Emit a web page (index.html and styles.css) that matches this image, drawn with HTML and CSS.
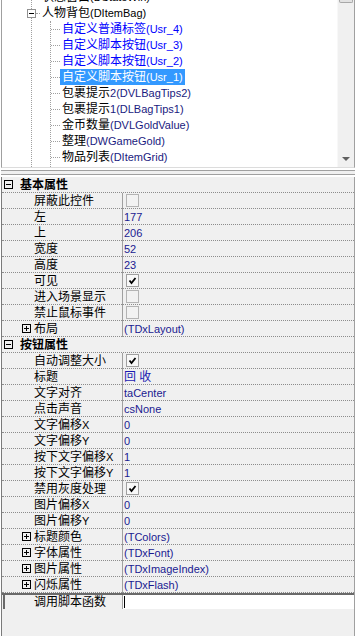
FILE: index.html
```html
<!DOCTYPE html>
<html lang="zh-CN">
<head>
    <meta charset="UTF-8">
    <meta name="viewport" content="width=device-width, initial-scale=1.0">
    <title>界面编辑器 - 属性</title>
    <link rel="stylesheet" href="styles.css">
</head>
<body>
    <div class="panel">
        <!-- Control tree -->
        <div class="tree">
            <div class="tree-view">
                <ul class="level1">
                    <li>
                        <div class="node"><span class="label">状态窗口<span class="en">(DStateWin)</span></span></div>
                    </li>
                    <li>
                        <div class="node parent">
                            <span class="toggle minus"></span><span class="stub"></span>
                            <span class="label">人物背包<span class="en">(DItemBag)</span></span>
                        </div>
                        <ul class="level2">
                            <li><div class="node"><span class="label custom">自定义普通标签<span class="en">(Usr_4)</span></span></div></li>
                            <li><div class="node"><span class="label custom">自定义脚本按钮<span class="en">(Usr_3)</span></span></div></li>
                            <li><div class="node"><span class="label custom">自定义脚本按钮<span class="en">(Usr_2)</span></span></div></li>
                            <li><div class="node"><span class="label custom selected">自定义脚本按钮<span class="en">(Usr_1)</span></span></div></li>
                            <li><div class="node"><span class="label">包裹提示<span class="en navy">2(DVLBagTips2)</span></span></div></li>
                            <li><div class="node"><span class="label">包裹提示<span class="en navy">1(DLBagTips1)</span></span></div></li>
                            <li><div class="node"><span class="label">金币数量<span class="en navy">(DVLGoldValue)</span></span></div></li>
                            <li><div class="node"><span class="label">整理<span class="en navy">(DWGameGold)</span></span></div></li>
                            <li><div class="node"><span class="label">物品列表<span class="en navy">(DItemGrid)</span></span></div></li>
                        </ul>
                    </li>
                </ul>
            </div>
            <div class="scrollbar">
                <div class="thumb"></div>
                <div class="arrow-down"></div>
            </div>
        </div>

        <div class="splitter"></div>

        <!-- Property inspector -->
        <div class="inspector">
            <div class="group"><span class="toggle minus dark"></span>基本属性</div>
            <div class="prop"><div class="name">屏蔽此控件</div><div class="value"><span class="check"></span></div></div>
            <div class="prop"><div class="name">左</div><div class="value">177</div></div>
            <div class="prop"><div class="name">上</div><div class="value">206</div></div>
            <div class="prop"><div class="name">宽度</div><div class="value">52</div></div>
            <div class="prop"><div class="name">高度</div><div class="value">23</div></div>
            <div class="prop"><div class="name">可见</div><div class="value"><span class="check checked"><svg viewBox="0 0 11 11" width="11" height="11"><path d="M2.5 5.5 L4.5 8 L8.5 3" fill="none" stroke="#000" stroke-width="1.8"/></svg></span></div></div>
            <div class="prop"><div class="name">进入场景显示</div><div class="value"><span class="check"></span></div></div>
            <div class="prop"><div class="name">禁止鼠标事件</div><div class="value"><span class="check"></span></div></div>
            <div class="prop"><div class="name sub"><span class="toggle plus dark"></span>布局</div><div class="value">(TDxLayout)</div></div>

            <div class="group"><span class="toggle minus dark"></span>按钮属性</div>
            <div class="prop"><div class="name">自动调整大小</div><div class="value"><span class="check checked"><svg viewBox="0 0 11 11" width="11" height="11"><path d="M2.5 5.5 L4.5 8 L8.5 3" fill="none" stroke="#000" stroke-width="1.8"/></svg></span></div></div>
            <div class="prop"><div class="name">标题</div><div class="value"><span class="zh">回 收</span></div></div>
            <div class="prop"><div class="name">文字对齐</div><div class="value">taCenter</div></div>
            <div class="prop"><div class="name">点击声音</div><div class="value">csNone</div></div>
            <div class="prop"><div class="name">文字偏移<span class="en">X</span></div><div class="value">0</div></div>
            <div class="prop"><div class="name">文字偏移<span class="en">Y</span></div><div class="value">0</div></div>
            <div class="prop"><div class="name">按下文字偏移<span class="en">X</span></div><div class="value">1</div></div>
            <div class="prop"><div class="name">按下文字偏移<span class="en">Y</span></div><div class="value">1</div></div>
            <div class="prop"><div class="name">禁用灰度处理</div><div class="value"><span class="check checked"><svg viewBox="0 0 11 11" width="11" height="11"><path d="M2.5 5.5 L4.5 8 L8.5 3" fill="none" stroke="#000" stroke-width="1.8"/></svg></span></div></div>
            <div class="prop"><div class="name">图片偏移<span class="en">X</span></div><div class="value">0</div></div>
            <div class="prop"><div class="name">图片偏移<span class="en">Y</span></div><div class="value">0</div></div>
            <div class="prop"><div class="name sub"><span class="toggle plus dark"></span>标题颜色</div><div class="value">(TColors)</div></div>
            <div class="prop"><div class="name sub"><span class="toggle plus dark"></span>字体属性</div><div class="value">(TDxFont)</div></div>
            <div class="prop"><div class="name sub"><span class="toggle plus dark"></span>图片属性</div><div class="value">(TDxImageIndex)</div></div>
            <div class="prop"><div class="name sub"><span class="toggle plus dark"></span>闪烁属性</div><div class="value">(TDxFlash)</div></div>
            <div class="prop editing"><div class="name">调用脚本函数</div><div class="value"><span class="caret"></span></div></div>
        </div>
    </div>
</body>
</html>
```

FILE: styles.css
```css
/* General Reset */
* {
    margin: 0;
    padding: 0;
    box-sizing: border-box;
}

body {
    font-family: 'Liberation Sans', 'Noto Sans CJK SC', sans-serif;
    font-size: 12px;
    line-height: 16px;
    color: #000;
    background: #fff;
    width: 360px;
    height: 636px;
    overflow: hidden;
}

.panel {
    width: 354px;
    margin-left: 1px;
}

.en {
    font-family: 'Liberation Sans', sans-serif;
    font-size: 11px;
}

.zh {
    font-size: 12px;
}

/* Tree view */
.tree {
    display: flex;
    height: 168px;
    background: #fff;
    border-left: 1px solid #a0a0a0;
    border-right: 1px solid #a0a0a0;
    border-bottom: 1px solid #dcdcdc;
}

.tree-view {
    flex: 1;
    overflow: hidden;
}

.tree-view ul {
    list-style: none;
    border-left: 1px dotted #a0a0a0;
}

.level1 {
    margin: -11px 0 0 29px;
}

.level2 {
    margin-left: 18px;
    padding-bottom: 16px;
}

.node {
    display: flex;
    align-items: center;
    height: 16px;
    white-space: nowrap;
}

.node::before {
    content: "";
    width: 8px;
    border-top: 1px dotted #a0a0a0;
}

.level2 .node::before {
    width: 9px;
}

.node.parent::before {
    display: none;
}

.stub {
    width: 4px;
    border-top: 1px dotted #a0a0a0;
}

.label {
    padding: 0 2px;
    height: 16px;
    line-height: 16px;
}

.label.custom {
    color: #0000ff;
}

.label.selected {
    background: #3399ff;
    color: #fff;
}

.navy {
    color: #1a1a80;
}

.toggle {
    display: grid;
    place-items: center;
    width: 9px;
    height: 9px;
    border: 1px solid #919191;
    background: #fff;
    flex-shrink: 0;
}

.node .toggle {
    margin-left: -5px;
}

.toggle::before,
.toggle::after {
    content: "";
    grid-area: 1 / 1;
    background: #000;
}

.toggle::before {
    width: 5px;
    height: 1px;
}

.toggle.plus::after {
    width: 1px;
    height: 5px;
}

.toggle.dark {
    border-color: #000;
    background: transparent;
}

/* Scrollbar */
.scrollbar {
    width: 17px;
    display: flex;
    flex-direction: column;
    justify-content: space-between;
    background: #f0f0f0;
    border-left: 1px solid #f8f8f8;
}

.thumb {
    height: 3px;
    margin: 0 1px;
    border: 1px solid #a8a8a8;
    border-top: none;
    border-radius: 0 0 2px 2px;
    background: #e2e2e2;
}

.arrow-down {
    height: 17px;
    display: flex;
    align-items: center;
    justify-content: center;
}

.arrow-down::after {
    content: "";
    border-left: 4px solid transparent;
    border-right: 4px solid transparent;
    border-top: 4px solid #606060;
}

.splitter {
    height: 5px;
    margin: 2px 0 2px;
    background: #f0f0f0;
    border-top: 1px solid #a0a0a0;
    border-bottom: 1px solid #a0a0a0;
}

/* Property inspector */
.inspector {
    height: 459px;
    background: #f0f0f0;
    border-left: 1px solid #7a7a7a;
    border-right: 1px solid #a0a0a0;
}

.group {
    display: flex;
    align-items: center;
    height: 16px;
    padding-left: 2px;
    gap: 7px;
    font-weight: bold;
    border-bottom: 1px dotted #8c8c8c;
}

.prop {
    display: flex;
    height: 16px;
}

.name,
.value {
    display: flex;
    align-items: center;
    border-bottom: 1px dotted #8c8c8c;
    white-space: nowrap;
}

.name {
    width: 120px;
    padding-left: 32px;
}

.name.sub {
    padding-left: 20px;
}

.name.sub .toggle {
    margin-right: 3px;
}

.value {
    flex: 1;
    padding-left: 1px;
    border-left: 1px solid #a0a0a0;
    font-size: 11px;
    color: #1a1a90;
}

.value .zh {
    color: #1a1ab0;
}

.check {
    display: flex;
    align-items: center;
    justify-content: center;
    width: 13px;
    height: 13px;
    margin-left: 2px;
    border: 1px solid #b4b4b4;
    background: #f2f2f2;
}

.check.checked {
    border-color: #a0a0a0;
    background: #f8f8f8;
}

/* Row being edited */
.prop.editing {
    border-top: 2px solid #696969;
}

.prop.editing .name,
.prop.editing .value {
    border-bottom: none;
}

.prop.editing .name {
    width: 119px;
    margin-left: 1px;
    padding-left: 29px;
    border-left: 2px solid #696969;
}

.prop.editing .value {
    background: #fff;
}

.caret {
    width: 1px;
    height: 12px;
    background: #000;
}
```
